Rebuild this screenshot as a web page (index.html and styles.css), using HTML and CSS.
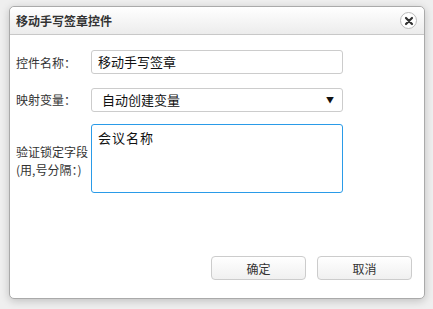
FILE: index.html
```html
<!DOCTYPE html>
<html lang="zh-cn">
<head>
  <meta charset="UTF-8">
  <title>移动手写签章控件</title>
  <link rel="stylesheet" href="styles.css">
</head>
<body>
  <div class="dialog">
    <div class="dialog-header">
      <span class="dialog-title">移动手写签章控件</span>
      <span class="close-btn">
        <svg width="10" height="10" viewBox="0 0 10 10">
          <path d="M2 2 L8 8 M8 2 L2 8" stroke="#333" stroke-width="2.2" stroke-linecap="round"/>
        </svg>
      </span>
    </div>
    <div class="dialog-body">
      <div class="form-row">
        <label class="form-label">控件名称：</label>
        <div class="field">移动手写签章</div>
      </div>
      <div class="form-row">
        <label class="form-label">映射变量：</label>
        <div class="field select">
          <span class="select-text">自动创建变量</span>
          <span class="arrow">▼</span>
        </div>
      </div>
      <div class="form-row row-area">
        <label class="form-label label-area">验证锁定字段<br>(用,号分隔：)</label>
        <div class="field area">会议名称</div>
      </div>
    </div>
    <div class="dialog-footer">
      <button class="btn">确定</button>
      <button class="btn">取消</button>
    </div>
  </div>
</body>
</html>
```

FILE: styles.css
```css
* {
  margin: 0;
  padding: 0;
  box-sizing: border-box;
}

body {
  background: #efefef;
  font-family: "Noto Sans CJK SC", "Noto Sans", sans-serif;
  font-size: 12px;
  color: #222;
  padding: 6px 0 0 9px;
  height: 309px;
  overflow: hidden;
}

.dialog {
  width: 416px;
  height: 293px;
  background: #fff;
  border: 1px solid #aaa;
  border-radius: 5px;
  box-shadow: 0 2px 8px rgba(0, 0, 0, 0.2);
  display: flex;
  flex-direction: column;
}

.dialog-header {
  height: 28px;
  display: flex;
  align-items: center;
  justify-content: space-between;
  padding: 0 6px 0 6px;
  border-bottom: 1px solid #c8c8c8;
  background: linear-gradient(to bottom, #fff 0%, #ececec 100%);
  border-radius: 5px 5px 0 0;
}

.dialog-title {
  font-size: 12px;
  font-weight: bold;
  color: #333;
}

.close-btn {
  width: 17px;
  height: 17px;
  border: 1px solid #bbb;
  border-radius: 50%;
  background: #fff;
  display: flex;
  align-items: center;
  justify-content: center;
  margin-right: 1px;
}

.dialog-body {
  flex: 1;
  padding: 15px 0 0 6px;
}

.form-row {
  display: flex;
  align-items: center;
  margin-bottom: 14px;
}

.form-label {
  width: 75px;
  font-size: 12px;
  color: #333;
}

.field {
  width: 252px;
  height: 24px;
  border: 1px solid #ccc;
  border-radius: 3px;
  padding: 0 6px;
  font-size: 13px;
  line-height: 22px;
  color: #111;
}

.select {
  display: flex;
  justify-content: space-between;
  align-items: center;
  padding: 0 8px 0 10px;
  margin-bottom: -1px;
}

.arrow {
  font-size: 8px;
  color: #111;
}

.row-area {
  margin-top: -1px;
}

.label-area {
  line-height: 18px;
  padding-top: 5px;
}

.area {
  height: 69px;
  border-color: #2a9be8;
  padding-top: 2px;
  letter-spacing: 1px;
}

.dialog-footer {
  display: flex;
  justify-content: flex-end;
  gap: 11px;
  padding: 0 12px 18px 0;
}

.btn {
  width: 95px;
  height: 24px;
  border: 1px solid #ccc;
  border-radius: 4px;
  background: linear-gradient(to bottom, #fff 0%, #f0f0f0 100%);
  font-family: "Noto Sans CJK SC", "Noto Sans", sans-serif;
  font-size: 12px;
  color: #333;
}
```
